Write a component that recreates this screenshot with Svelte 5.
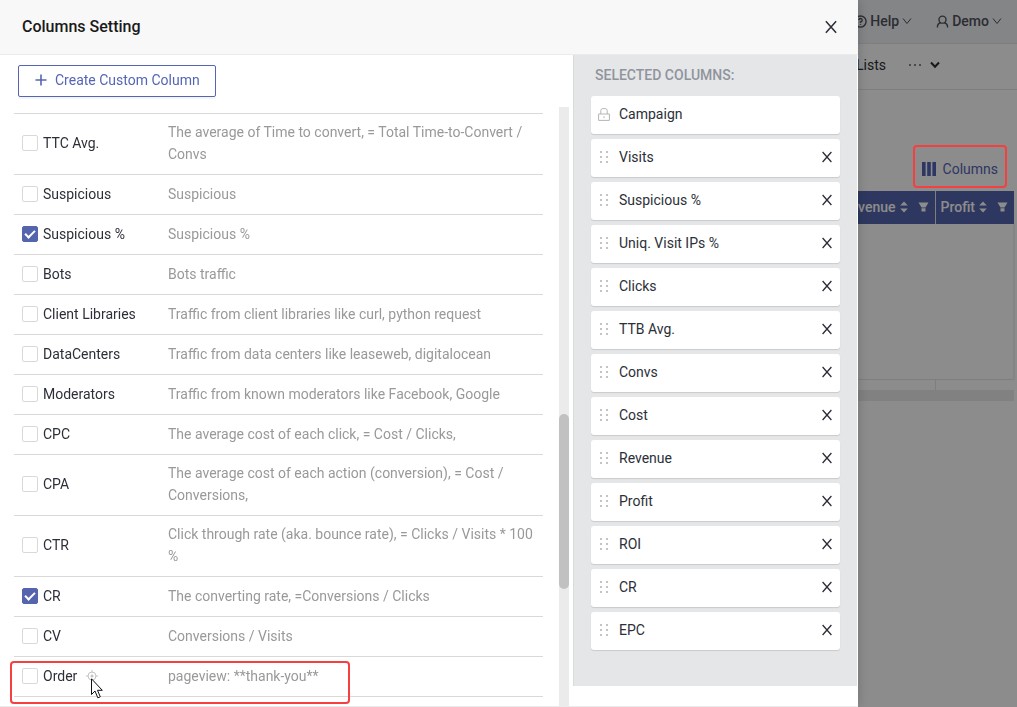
<script lang="ts">
	type Metric = { name: string; description: string; checked?: boolean; custom?: boolean };

	let metrics: Metric[] = $state([
		{ name: 'TTC Avg.', description: 'The average of Time to convert, = Total Time-to-Convert / Convs' },
		{ name: 'Suspicious', description: 'Suspicious' },
		{ name: 'Suspicious %', description: 'Suspicious %', checked: true },
		{ name: 'Bots', description: 'Bots traffic' },
		{ name: 'Client Libraries', description: 'Traffic from client libraries like curl, python request' },
		{ name: 'DataCenters', description: 'Traffic from data centers like leaseweb, digitalocean' },
		{ name: 'Moderators', description: 'Traffic from known moderators like Facebook, Google' },
		{ name: 'CPC', description: 'The average cost of each click, = Cost / Clicks,' },
		{ name: 'CPA', description: 'The average cost of each action (conversion), = Cost / Conversions,' },
		{ name: 'CTR', description: 'Click through rate (aka. bounce rate), = Clicks / Visits * 100 %' },
		{ name: 'CR', description: 'The converting rate, =Conversions / Clicks', checked: true },
		{ name: 'CV', description: 'Conversions / Visits' },
		{ name: 'Order', description: 'pageview: **thank-you**', custom: true }
	]);

	let selected = $state([
		'Visits',
		'Suspicious %',
		'Uniq. Visit IPs %',
		'Clicks',
		'TTB Avg.',
		'Convs',
		'Cost',
		'Revenue',
		'Profit',
		'ROI',
		'CR',
		'EPC'
	]);

	let open = $state(true);

	function remove(name: string) {
		selected = selected.filter((item) => item !== name);
	}
</script>

{#snippet cross()}
	<svg class="cross" viewBox="0 0 12 12" aria-hidden="true">
		<path d="M1.6 1 L10.4 11 M10.4 1 L1.6 11" />
	</svg>
{/snippet}

{#snippet chevron()}
	<svg class="chevron" viewBox="0 0 10 8" aria-hidden="true">
		<path d="M1 1.5 L5 6.5 L9 1.5" />
	</svg>
{/snippet}

{#snippet sortIcons()}
	<svg class="sort" viewBox="0 0 8 12" aria-hidden="true">
		<path d="M4 0.5 L7.8 4.5 H0.2 Z M4 11.5 L0.2 7.5 H7.8 Z" />
	</svg>
	<svg class="filter" viewBox="0 0 12 11" aria-hidden="true">
		<path d="M0.5 0.5 H11.5 L8.2 6 H3.8 Z M3.8 7 H8.2 V10.5 H3.8 Z" />
	</svg>
{/snippet}

<div class="page">
	<header class="topbar">
		<button type="button" class="top-item">
			<svg class="user" viewBox="0 0 14 14" aria-hidden="true">
				<circle cx="7" cy="7" r="6" />
				<path d="M5.2 5.5 A1.8 1.8 0 1 1 7 7.4 V8.5 M7 10 V10.8" />
			</svg>
			Help
			{@render chevron()}
		</button>
		<button type="button" class="top-item">
			<svg class="user" viewBox="0 0 14 14" aria-hidden="true">
				<circle cx="7" cy="5" r="3.8" />
				<path d="M1.5 13.5 C1.5 10.5 3.2 8.8 5 8.4 M12.5 13.5 C12.5 10.5 10.8 8.8 9 8.4" />
			</svg>
			Demo
			{@render chevron()}
		</button>
	</header>

	<nav class="tabs">
		<a href="#lists">Lists</a>
		<button type="button" class="more" aria-label="More tabs">
			<i></i><i></i><i></i>
		</button>
		<button type="button" class="expand" aria-label="Expand">
			<svg viewBox="0 0 10 8" aria-hidden="true"><path d="M1 1.5 L5 5.8 L9 1.5" /></svg>
		</button>
	</nav>

	<div class="toolbar">
		<button type="button" class="columns-btn">
			<svg viewBox="0 0 14 14" aria-hidden="true">
				<path d="M0 0 H3.6 V14 H0 Z M5.2 0 H8.8 V14 H5.2 Z M10.4 0 H14 V14 H10.4 Z" />
			</svg>
			Columns
		</button>
	</div>

	<table class="report">
		<thead>
			<tr>
				<th><span>Revenue {@render sortIcons()}</span></th>
				<th class="last"><span>Profit {@render sortIcons()}</span></th>
			</tr>
		</thead>
		<tbody>
			<tr><td></td><td class="last"></td></tr>
		</tbody>
		<tfoot>
			<tr><td></td><td class="last"></td></tr>
		</tfoot>
	</table>
	<div class="report-scroll"></div>
</div>

{#if open}
	<div class="mask"></div>
	<div class="highlight columns-highlight"></div>

	<div class="drawer" role="dialog" aria-labelledby="drawer-title">
		<div class="drawer-header">
			<h2 id="drawer-title">Columns Setting</h2>
			<button type="button" class="close" aria-label="Close" onclick={() => (open = false)}>
				{@render cross()}
			</button>
		</div>

		<div class="drawer-body">
			<section class="available">
				<button type="button" class="create-btn">
					<svg viewBox="0 0 12 12" aria-hidden="true"><path d="M6 0.5 V11.5 M0.5 6 H11.5" /></svg>
					Create Custom Column
				</button>

				<div class="scroller">
					<div class="list">
						<table class="metrics">
							<tbody>
								{#each metrics as metric, i}
									<tr>
										<td class="name">
											<label>
												<input type="checkbox" id="metric-{i}" bind:checked={metric.checked} />
												{metric.name}
												{#if metric.custom}
													<svg class="target" viewBox="0 0 12 12" aria-hidden="true">
														<circle cx="6" cy="6" r="4" />
														<circle class="dot" cx="6" cy="6" r="1.5" />
														<path d="M6 0 V2.5 M6 9.5 V12 M0 6 H2.5 M9.5 6 H12" />
													</svg>
												{/if}
											</label>
											{#if metric.custom}
												<div class="highlight order-highlight"></div>
												<svg class="pointer" viewBox="0 0 12 21" aria-hidden="true">
													<path
														d="M0.5 0.8 V16.5 L4 13 L6.8 19.8 L9.3 18.8 L6.5 12.3 H11.3 Z"
													/>
												</svg>
											{/if}
										</td>
										<td>{metric.description}</td>
									</tr>
								{/each}
							</tbody>
						</table>
					</div>
					<div class="scrollbar"><div class="thumb"></div></div>
				</div>
			</section>

			<aside class="selected">
				<h3>SELECTED COLUMNS:</h3>
				<ul>
					<li>
						<svg class="lock" viewBox="0 0 12 13" aria-hidden="true">
							<path d="M2.8 6 V2.6 A2 2 0 0 1 4.8 0.6 H7.2 A2 2 0 0 1 9.2 2.6 V6 M0.6 6 H11.4 V12.4 H0.6 Z" />
							<path d="M6 8.2 V10.2" />
						</svg>
						<span>Campaign</span>
					</li>
					{#each selected as name (name)}
						<li>
							<svg class="grip" viewBox="0 0 12 12" aria-hidden="true">
								<path
									d="M2 0 h2 v2 h-2 Z M8 0 h2 v2 h-2 Z M2 5 h2 v2 h-2 Z M8 5 h2 v2 h-2 Z M2 10 h2 v2 h-2 Z M8 10 h2 v2 h-2 Z"
								/>
							</svg>
							<span>{name}</span>
							<button type="button" aria-label="Remove {name}" onclick={() => remove(name)}>
								{@render cross()}
							</button>
						</li>
					{/each}
				</ul>
			</aside>
		</div>
		<div class="drawer-footer"></div>
	</div>
{/if}

<style>
	:global(body) {
		font-family: Roboto, 'Liberation Sans', sans-serif;
		font-size: 14px;
		line-height: 22px;
		color: #2c2f38;
		background: #fff;
		overflow: hidden;
	}

	button {
		font: inherit;
		color: inherit;
		background: none;
		border: none;
		padding: 0;
		cursor: pointer;
	}

	svg {
		flex: none;
		fill: none;
		stroke: currentColor;
	}

	.page {
		min-height: 100vh;
	}

	.topbar {
		display: flex;
		justify-content: flex-end;
		gap: 24px;
		height: 42px;
		padding: 0 15px 1px 0;
		background: #f0f2f5;
		border-bottom: 1px solid #e6e8eb;
		color: #50535e;
	}

	.top-item {
		display: flex;
		align-items: center;
		gap: 3px;
		font-weight: 500;
	}

	.user {
		width: 13px;
		height: 13px;
		stroke-width: 1.5;
	}

	.chevron {
		width: 10px;
		height: 8px;
	}

	.tabs {
		display: flex;
		align-items: center;
		justify-content: flex-end;
		height: 41px;
		padding: 0 77px 4px 0;
		border-bottom: 1px solid #e6e6e6;
	}

	.tabs a {
		color: #2c2f38;
		text-decoration: none;
	}

	.more {
		display: flex;
		gap: 3px;
		margin: 0 9px 0 23px;
	}

	.more i {
		width: 2px;
		height: 2px;
		background: #888;
	}

	.expand svg {
		display: block;
		width: 10px;
		height: 8px;
		stroke-width: 2;
	}

	.toolbar {
		display: flex;
		justify-content: flex-end;
		padding: 62px 19px 5px;
	}

	.columns-btn {
		display: flex;
		align-items: center;
		gap: 7px;
		height: 34px;
		color: #5565b5;
	}

	.columns-btn svg {
		width: 14px;
		height: 14px;
		fill: currentColor;
		stroke: none;
	}

	.report {
		width: calc(100% - 2px);
		border-collapse: collapse;
	}

	.report th {
		height: 33px;
		padding: 0 6px 1px 5px;
		box-sizing: border-box;
		background: #5565ad;
		color: #fff;
		font-weight: 500;
		border-right: 1px solid #e6e6e6;
	}

	.report th span {
		display: flex;
		align-items: center;
		justify-content: flex-end;
		gap: 4px;
	}

	.report .last {
		width: 79px;
		box-sizing: border-box;
		border-right: none;
	}

	.report th svg {
		fill: currentColor;
		stroke: none;
	}

	.sort {
		width: 8px;
		height: 12px;
		margin-right: 6px;
	}

	.filter {
		width: 11px;
		height: 10px;
	}

	.report tbody td {
		height: 155px;
		padding: 0;
		border-bottom: 1px solid #e6e6e6;
	}

	.report tbody .last {
		border-right: 2px solid #f0f0f0;
	}

	.report tfoot td {
		height: 10px;
		padding: 0;
		border-right: 1px solid #e6e6e6;
	}

	.report-scroll {
		height: 11px;
		margin-right: 3px;
		background: #ebebeb;
	}

	.mask {
		position: fixed;
		inset: 0;
		background: rgba(0, 0, 0, 0.45);
	}

	.highlight {
		position: absolute;
		box-sizing: border-box;
		border: 2px solid #f5403f;
		border-radius: 4px;
		pointer-events: none;
	}

	.columns-highlight {
		top: 145px;
		right: 10px;
		width: 94px;
		height: 43px;
	}

	.drawer {
		position: fixed;
		inset: 0 159px 0 0;
		display: flex;
		flex-direction: column;
		background: #fff;
		box-shadow: 2px 0 10px rgba(0, 0, 0, 0.15);
	}

	.drawer-header {
		display: flex;
		align-items: center;
		justify-content: space-between;
		box-sizing: border-box;
		height: 55px;
		padding: 0 20px 0 22px;
		background: #f8f8f8;
		border-bottom: 1px solid #ebebeb;
	}

	.drawer-header h2 {
		margin: 0;
		font-size: 16px;
		font-weight: 500;
		color: #1a1a1a;
	}

	.cross {
		display: block;
		width: 12px;
		height: 12px;
		stroke-width: 1.3;
	}

	.close .cross {
		width: 14px;
		height: 14px;
	}

	.drawer-body {
		display: flex;
		flex: 1;
		min-height: 0;
	}

	.drawer-footer {
		border-top: 1px solid #ebebeb;
	}

	.available {
		display: flex;
		flex: 1;
		flex-direction: column;
		min-width: 0;
		padding-right: 4px;
	}

	.create-btn {
		display: flex;
		align-items: center;
		align-self: flex-start;
		gap: 8px;
		box-sizing: border-box;
		margin: 10px 18px;
		height: 32px;
		padding: 0 15px 2px 16px;
		border: 1px solid #5565b5;
		border-radius: 2px;
		color: #5565b5;
		box-shadow: 0 2px 0 rgba(0, 0, 0, 0.04);
	}

	.create-btn svg {
		width: 12px;
		height: 12px;
		stroke-width: 1.6;
	}

	.scroller {
		display: flex;
		flex: 1;
		min-height: 0;
	}

	.list {
		flex: 1;
		padding: 6px 16px 0 14px;
		overflow: hidden;
	}

	.scrollbar {
		display: grid;
		grid-template-rows: 307fr 175fr 117fr;
		width: 10px;
		background: #ebebeb;
	}

	.thumb {
		grid-row: 2;
		background: #c1c1c1;
		border-radius: 5px;
	}

	.metrics {
		width: 100%;
		border-spacing: 0;
	}

	.metrics td {
		box-sizing: border-box;
		height: 40px;
		padding: 7px 8px 9px 0;
		border-top: 1px solid #d9d9d9;
		color: #999;
	}

	.metrics tr:last-child td {
		height: 41px;
		border-bottom: 1px solid #d9d9d9;
	}

	.metrics .name {
		position: relative;
		width: 154px;
		padding-left: 8px;
		color: #2c2f38;
	}

	.metrics label {
		display: flex;
		align-items: center;
		gap: 5px;
	}

	.metrics input {
		appearance: none;
		flex: none;
		width: 16px;
		height: 16px;
		margin: 0;
		border: 1px solid #d9d9d9;
		border-radius: 2px;
		background: #fff;
	}

	.metrics input:checked {
		display: grid;
		place-items: center;
		background: #5565ad;
		border-color: #5565ad;
	}

	.metrics input:checked::before {
		content: '';
		width: 8px;
		height: 4px;
		margin-bottom: 2px;
		border: solid #fff;
		border-width: 0 0 2px 2px;
		box-sizing: content-box;
		transform: rotate(-45deg);
	}

	.target {
		width: 12px;
		height: 12px;
		margin-left: 4px;
		color: #c4c4c4;
	}

	.target .dot {
		fill: currentColor;
		stroke: none;
	}

	.order-highlight {
		top: 4px;
		left: -4px;
		width: 340px;
		height: 43px;
	}

	.pointer {
		position: absolute;
		top: 21px;
		left: 77px;
		width: 12px;
		height: 21px;
		fill: #fff;
		stroke: #111;
	}

	.selected {
		box-sizing: border-box;
		width: 284px;
		margin: 0 1px 20px 0;
		padding: 9px 17px 0 17px;
		background: #e5e6e8;
		border-left: 1px solid #d9dadc;
	}

	.selected h3 {
		margin: 0 0 10px 4px;
		font-size: 14px;
		font-weight: 500;
		color: #8f949c;
	}

	.selected ul {
		display: grid;
		gap: 5px;
		margin: 0;
		padding: 0;
		list-style: none;
	}

	.selected li {
		display: flex;
		align-items: center;
		gap: 9px;
		box-sizing: border-box;
		height: 38px;
		padding: 0 7px 2px;
		background: #fff;
		border-radius: 3px;
		box-shadow: 0 1px 1px rgba(0, 0, 0, 0.12);
	}

	.selected li span {
		flex: 1;
	}

	.grip {
		width: 12px;
		height: 12px;
		fill: #c4c4c4;
		stroke: none;
	}

	.lock {
		width: 12px;
		height: 13px;
		color: #b5b5b5;
	}
</style>
